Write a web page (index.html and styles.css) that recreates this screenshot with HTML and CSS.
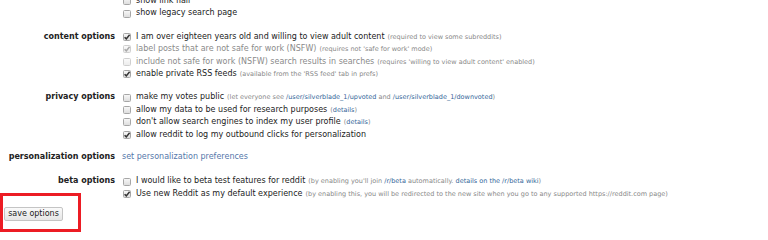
FILE: index.html
```html
<!DOCTYPE html>
<html>
<head>
<meta charset="utf-8">
<link rel="stylesheet" href="styles.css">
</head>
<body>
<div class="prefs">
  <div class="section first">
    <div class="label"></div>
    <div class="opts">
      <div class="row"><span class="cb"></span><span class="txt">show link flair</span></div>
      <div class="row"><span class="cb"></span><span class="txt">show legacy search page</span></div>
    </div>
  </div>

  <div class="section">
    <div class="label">content options</div>
    <div class="opts">
      <div class="row"><span class="cb on"><svg viewBox="0 0 8 8"><path d="M1.6 4.2 L3.3 5.9 L6.6 1.8"/></svg></span><span class="txt">I am over eighteen years old and willing to view adult content</span> <span class="note">(required to view some subreddits)</span></div>
      <div class="row dis"><span class="cb on dis"><svg viewBox="0 0 8 8"><path d="M1.6 4.2 L3.3 5.9 L6.6 1.8"/></svg></span><span class="txt">label posts that are not safe for work (NSFW)</span> <span class="note">(requires not 'safe for work' mode)</span></div>
      <div class="row dis"><span class="cb dis"></span><span class="txt">include not safe for work (NSFW) search results in searches</span> <span class="note">(requires 'willing to view adult content' enabled)</span></div>
      <div class="row"><span class="cb on"><svg viewBox="0 0 8 8"><path d="M1.6 4.2 L3.3 5.9 L6.6 1.8"/></svg></span><span class="txt">enable private RSS feeds</span> <span class="note">(available from the 'RSS feed' tab in prefs)</span></div>
    </div>
  </div>

  <div class="section">
    <div class="label">privacy options</div>
    <div class="opts">
      <div class="row"><span class="cb"></span><span class="txt">make my votes public</span> <span class="note">(let everyone see <a class="link">/user/silverblade_1/upvoted</a> and <a class="link">/user/silverblade_1/downvoted</a>)</span></div>
      <div class="row"><span class="cb"></span><span class="txt">allow my data to be used for research purposes</span> <span class="note">(<a class="link">details</a>)</span></div>
      <div class="row"><span class="cb"></span><span class="txt">don't allow search engines to index my user profile</span> <span class="note">(<a class="link">details</a>)</span></div>
      <div class="row"><span class="cb on"><svg viewBox="0 0 8 8"><path d="M1.6 4.2 L3.3 5.9 L6.6 1.8"/></svg></span><span class="txt">allow reddit to log my outbound clicks for personalization</span></div>
    </div>
  </div>

  <div class="section tight">
    <div class="label">personalization options</div>
    <div class="opts">
      <div class="row"><a class="mainlink">set personalization preferences</a></div>
    </div>
  </div>

  <div class="section loose">
    <div class="label">beta options</div>
    <div class="opts">
      <div class="row"><span class="cb"></span><span class="txt">I would like to beta test features for reddit</span> <span class="note">(by enabling you'll join <a class="link">/r/beta</a> automatically. <a class="link">details on the /r/beta wiki</a>)</span></div>
      <div class="row"><span class="cb on"><svg viewBox="0 0 8 8"><path d="M1.6 4.2 L3.3 5.9 L6.6 1.8"/></svg></span><span class="txt">Use new Reddit as my default experience</span> <span class="note">(by enabling this, you will be redirected to the new site when you go to any supported https://reddit.com page)</span></div>
    </div>
  </div>

  <div class="actions">
    <button class="save" type="button">save options</button>
  </div>
</div>
<div class="highlight"></div>
</body>
</html>
```

FILE: styles.css
```css
html, body {
  margin: 0;
  padding: 0;
  background: #ffffff;
  overflow: hidden;
}

body {
  width: 768px;
  height: 235px;
  position: relative;
  font-family: "DejaVu Sans", Verdana, sans-serif;
  font-size: 8px;
  color: #222;
}

.prefs {
  margin-top: -5px;
  display: flex;
  flex-direction: column;
  gap: 11px;
}

.section {
  display: grid;
  grid-template-columns: 115px 1fr;
  column-gap: 7px;
  line-height: 12.4px;
}

.section.tight {
  margin-top: -1px;
}

.section.loose {
  margin-top: 1px;
}

.label {
  text-align: right;
  font-weight: bold;
  white-space: nowrap;
  color: #222;
}

.opts {
  display: flex;
  flex-direction: column;
}

.row {
  height: 12.4px;
  display: flex;
  align-items: center;
  white-space: nowrap;
}

.row > .note {
  margin-left: 3px;
}

.cb {
  box-sizing: border-box;
  width: 8px;
  height: 8px;
  margin-right: 5px;
  margin-left: 1px;
  border: 1px solid #a6a6a6;
  border-radius: 1.5px;
  background: linear-gradient(#f7f7f7, #dedede);
  flex: none;
  position: relative;
}

.cb svg {
  position: absolute;
  left: -1px;
  top: -1px;
  width: 8px;
  height: 8px;
}

.cb svg path {
  fill: none;
  stroke: #333;
  stroke-width: 1.5;
}

.cb.dis {
  border-color: #cfcfcf;
  background: linear-gradient(#fafafa, #ececec);
}

.cb.dis svg path {
  stroke: #a8a8a8;
}

.row.dis .txt {
  color: #8a8a8a;
}

.note {
  font-size: 6.5px;
  color: #888;
}

.link {
  color: #336699;
  text-decoration: none;
}

.mainlink {
  color: #5577aa;
  text-decoration: none;
}

.actions {
  margin-top: -4px;
  padding-left: 4px;
}

.save {
  font-family: "DejaVu Sans", Verdana, sans-serif;
  font-size: 8px;
  color: #222;
  width: 59px;
  height: 14px;
  padding: 0;
  border: 1px solid #c4c4c4;
  border-radius: 2px;
  background: linear-gradient(#fafafa, #e6e6e6);
  line-height: 12px;
}

.highlight {
  position: absolute;
  left: 0;
  top: 193px;
  width: 81px;
  height: 39px;
  box-sizing: border-box;
  border: 3px solid #ec1c24;
}
```
